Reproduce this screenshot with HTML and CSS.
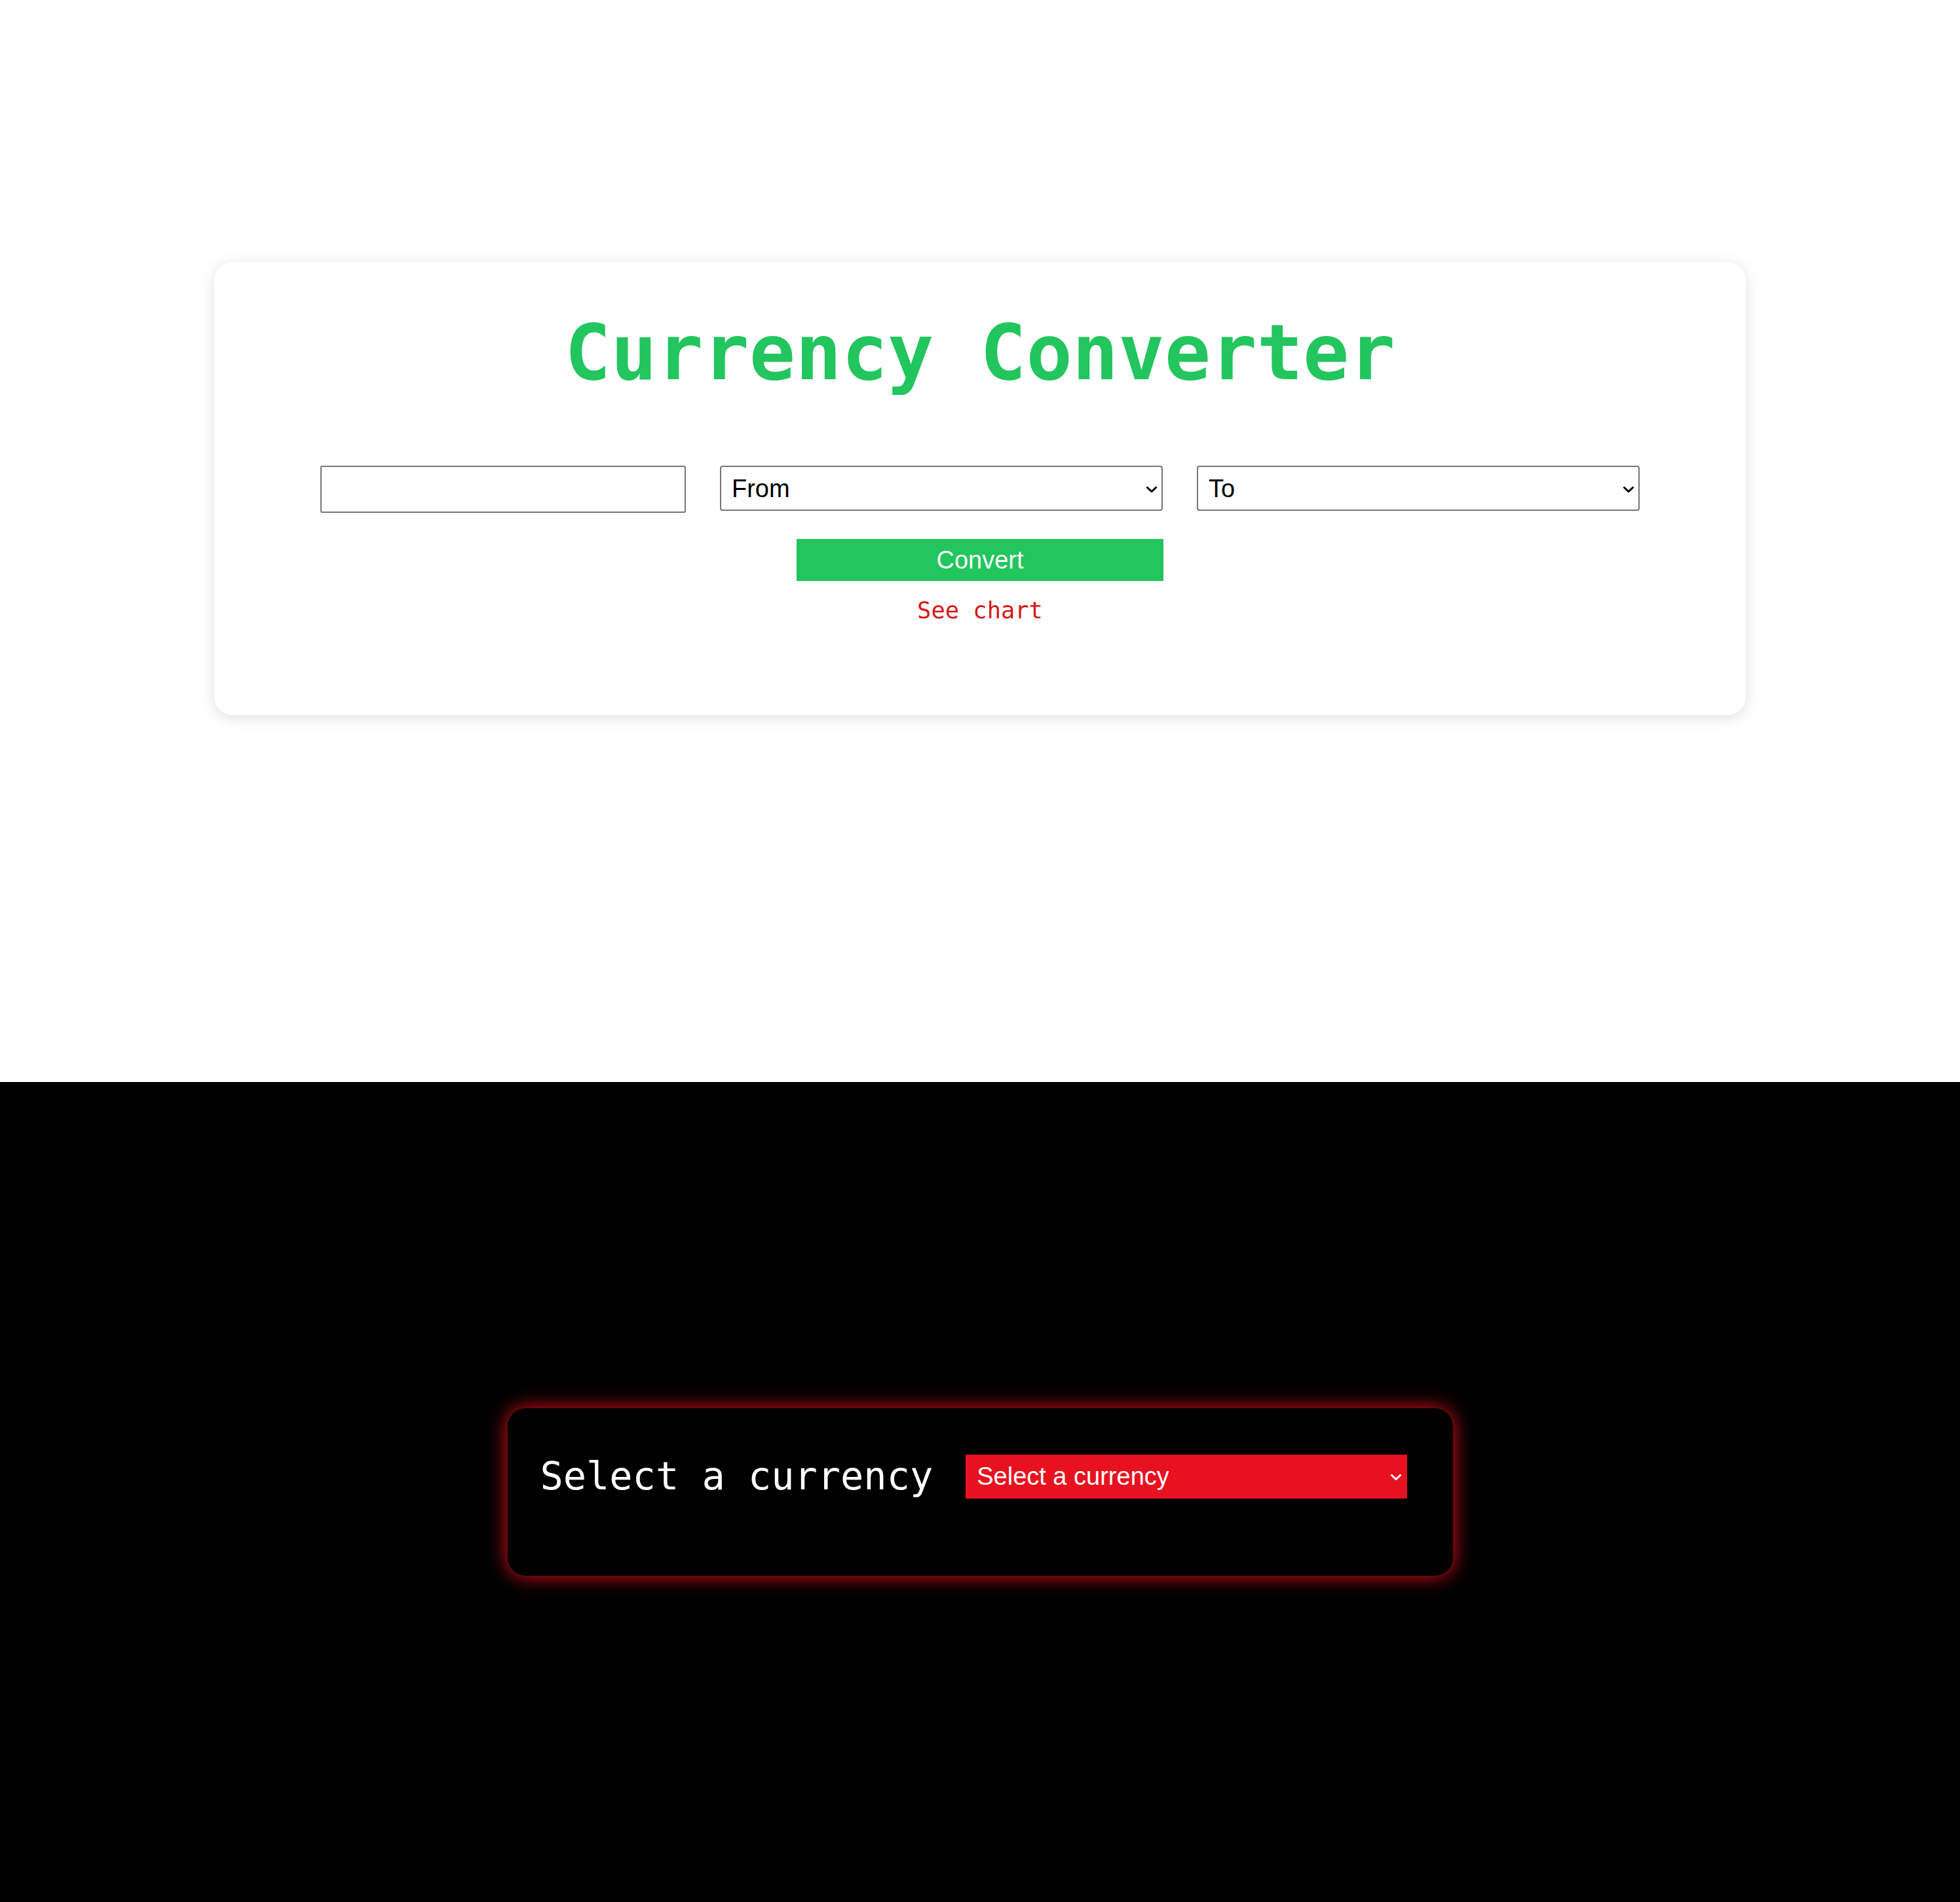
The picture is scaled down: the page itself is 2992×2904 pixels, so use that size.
FILE: index.html
```html
<!DOCTYPE html>
<html lang="en">
<head>
<meta charset="utf-8">
<title>Currency Converter</title>
<link rel="stylesheet" href="styles.css">
</head>
<body>
<section class="light">
  <div class="card">
    <h1 class="title">Currency Converter</h1>
    <div class="row">
      <input class="amount" type="text">
      <div class="select-wrap">
        <select class="pick"><option>From</option></select>
        <svg class="chev" viewBox="0 0 18 10" width="18" height="10"><path d="M1.5 1.5 L9 8.5 L16.5 1.5" fill="none" stroke="#000" stroke-width="3"/></svg>
      </div>
      <div class="select-wrap">
        <select class="pick"><option>To</option></select>
        <svg class="chev" viewBox="0 0 18 10" width="18" height="10"><path d="M1.5 1.5 L9 8.5 L16.5 1.5" fill="none" stroke="#000" stroke-width="3"/></svg>
      </div>
    </div>
    <button class="convert">Convert</button>
    <a class="chart-link">See chart</a>
  </div>
</section>
<section class="dark">
  <div class="glow-card">
    <div class="glow-row">
      <span class="glow-label">Select a currency</span>
      <div class="select-wrap">
        <select class="red-pick"><option>Select a currency</option></select>
        <svg class="chev" viewBox="0 0 18 10" width="18" height="10"><path d="M1.5 1.5 L9 8.5 L16.5 1.5" fill="none" stroke="#fff" stroke-width="3"/></svg>
      </div>
    </div>
  </div>
</section>
</body>
</html>
```
FILE: styles.css
```css
html, body {
  margin: 0;
  padding: 0;
}
body {
  font-family: "Liberation Sans", Arial, sans-serif;
}
.light {
  height: 1652px;
  background: #fff;
  padding-top: 400px;
  box-sizing: border-box;
}
.card {
  width: 2338px;
  height: 692px;
  box-sizing: border-box;
  margin: 0 auto;
  background: #fff;
  border-radius: 28px;
  box-shadow: 0 4px 22px rgba(0, 0, 0, 0.13);
  padding-top: 71px;
  display: flex;
  flex-direction: column;
  align-items: center;
}
.title {
  margin: 0;
  font-family: "DejaVu Sans Mono", monospace;
  font-weight: bold;
  font-size: 117px;
  line-height: 135px;
  color: #22c55e;
  text-align: center;
}
.row {
  display: flex;
  align-items: flex-start;
  gap: 52px;
  margin-top: 105px;
}
.amount {
  width: 558px;
  height: 72px;
  box-sizing: border-box;
  border: 2px solid #767676;
  border-radius: 3px;
  margin: 0;
  padding: 0 14px;
  font-size: 38px;
  font-family: "Liberation Sans", Arial, sans-serif;
}
.select-wrap {
  position: relative;
}
.pick {
  appearance: none;
  -webkit-appearance: none;
  width: 676px;
  height: 69px;
  box-sizing: border-box;
  border: 2px solid #767676;
  border-radius: 4px;
  background: #fff;
  color: #000;
  margin: 0;
  padding: 0 16px;
  font-size: 38px;
  font-family: "Liberation Sans", Arial, sans-serif;
  display: block;
}
.chev {
  position: absolute;
  right: 8px;
  top: 50%;
  margin-top: -4px;
  pointer-events: none;
}
.convert {
  margin-top: 40px;
  width: 560px;
  height: 64px;
  border: none;
  border-radius: 0;
  background: #22c55e;
  color: #fff;
  font-family: "Liberation Sans", Arial, sans-serif;
  font-size: 38px;
  padding: 0;
}
.chart-link {
  margin-top: 24px;
  font-family: "DejaVu Sans Mono", monospace;
  font-size: 35.4px;
  line-height: 41px;
  color: #d81616;
}
.dark {
  height: 1252px;
  background: #000;
  display: flex;
  align-items: center;
  justify-content: center;
}
.glow-card {
  width: 1443px;
  height: 256px;
  box-sizing: border-box;
  background: #000;
  border-radius: 28px;
  box-shadow: 0 0 30px #ec1020;
  padding: 70px 70px 0 50px;
}
.glow-row {
  display: flex;
  align-items: center;
  gap: 50px;
}
.glow-label {
  font-family: "DejaVu Sans Mono", monospace;
  font-size: 58.6px;
  color: #fff;
  white-space: nowrap;
}
.red-pick {
  appearance: none;
  -webkit-appearance: none;
  width: 674px;
  height: 67px;
  box-sizing: border-box;
  border: none;
  background: #e8111f;
  color: #fff;
  margin: 0;
  padding: 0 17px;
  font-size: 38px;
  font-family: "Liberation Sans", Arial, sans-serif;
  display: block;
}
```
